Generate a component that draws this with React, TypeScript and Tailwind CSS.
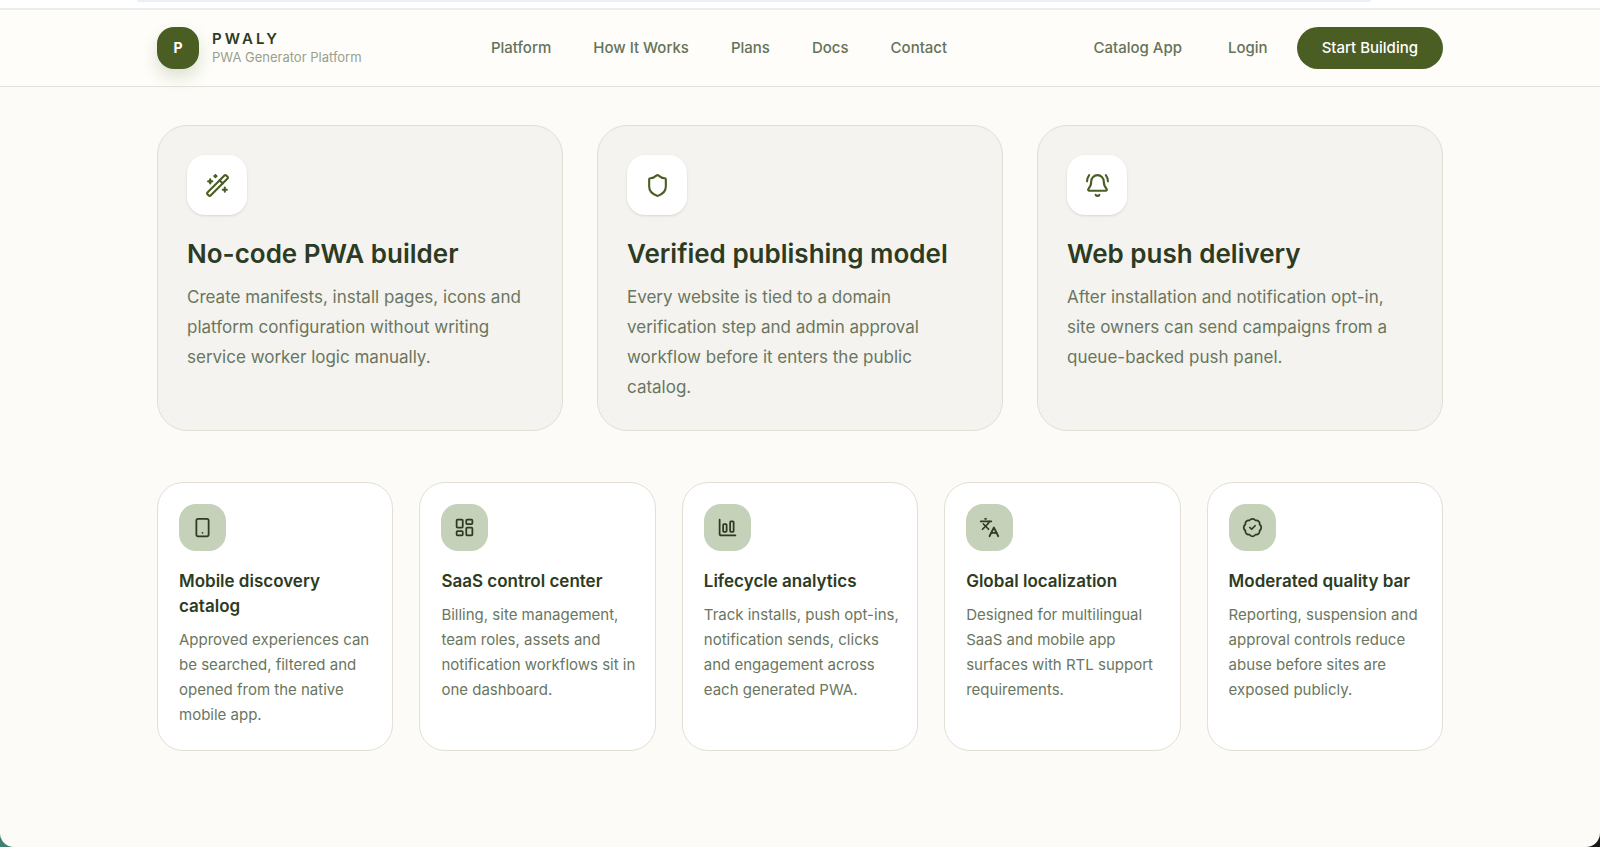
import {
  BadgeCheck,
  BellRing,
  ChartColumnBig,
  Languages,
  LayoutDashboard,
  Shield,
  Smartphone,
  WandSparkles,
  type LucideIcon,
} from "lucide-react";

type Feature = {
  icon: LucideIcon;
  title: string;
  description: string;
};

const navLinks = ["Platform", "How It Works", "Plans", "Docs", "Contact"];

const pillars: Feature[] = [
  {
    icon: WandSparkles,
    title: "No-code PWA builder",
    description:
      "Create manifests, install pages, icons and platform configuration without writing service worker logic manually.",
  },
  {
    icon: Shield,
    title: "Verified publishing model",
    description:
      "Every website is tied to a domain verification step and admin approval workflow before it enters the public catalog.",
  },
  {
    icon: BellRing,
    title: "Web push delivery",
    description:
      "After installation and notification opt-in, site owners can send campaigns from a queue-backed push panel.",
  },
];

const capabilities: Feature[] = [
  {
    icon: Smartphone,
    title: "Mobile discovery catalog",
    description:
      "Approved experiences can be searched, filtered and opened from the native mobile app.",
  },
  {
    icon: LayoutDashboard,
    title: "SaaS control center",
    description:
      "Billing, site management, team roles, assets and notification workflows sit in one dashboard.",
  },
  {
    icon: ChartColumnBig,
    title: "Lifecycle analytics",
    description:
      "Track installs, push opt-ins, notification sends, clicks and engagement across each generated PWA.",
  },
  {
    icon: Languages,
    title: "Global localization",
    description:
      "Designed for multilingual SaaS and mobile app surfaces with RTL support requirements.",
  },
  {
    icon: BadgeCheck,
    title: "Moderated quality bar",
    description:
      "Reporting, suspension and approval controls reduce abuse before sites are exposed publicly.",
  },
];

const Header = () => {
  return (
    <header className="border-b border-[#e6e1d8] bg-[#fefdf9]">
      <div className="mx-auto flex h-[76px] max-w-[1286px] items-center justify-between text-[15px] font-medium text-[#65735a]">
        <a href="#" className="flex items-center gap-[13px]">
          <span className="flex size-[42px] items-center justify-center rounded-[17px] bg-[#4a5d23] text-sm font-bold text-white shadow-[0_8px_16px_rgba(74,93,35,0.18)]">
            P
          </span>
          <span className="flex flex-col">
            <span className="text-[15px] leading-[18px] font-semibold tracking-[0.2em] text-[#2d3b22]">
              PWALY
            </span>
            <span className="text-[13px] leading-[19px] font-normal text-[#98a18e]">
              PWA Generator Platform
            </span>
          </span>
        </a>
        <nav className="flex items-center gap-[42px]">
          {navLinks.map((label) => (
            <a key={label} href="#">
              {label}
            </a>
          ))}
        </nav>
        <div className="flex items-center gap-3">
          <a href="#" className="px-[17px]">
            Catalog App
          </a>
          <a href="#" className="px-[17px]">
            Login
          </a>
          <button
            type="button"
            className="h-[42px] rounded-full bg-[#4a5d23] px-[25px] text-white"
          >
            Start Building
          </button>
        </div>
      </div>
    </header>
  );
};

const PillarCard = ({ icon: Icon, title, description }: Feature) => {
  return (
    <article className="rounded-[30px] border border-[#e1dfd3] bg-[#f4f3ef] px-[29px] pt-[29px] pb-7">
      <div className="flex size-[60px] items-center justify-center rounded-[18px] bg-white text-[#4a5d23] shadow-sm">
        <Icon size={25} />
      </div>
      <h3 className="mt-[22px] text-[26px] leading-[34px] font-semibold text-[#2d3b22]">
        {title}
      </h3>
      <p className="mt-[11px] text-[17px] leading-[30px] text-[#6a7660]">
        {description}
      </p>
    </article>
  );
};

const CapabilityCard = ({ icon: Icon, title, description }: Feature) => {
  return (
    <article className="rounded-[26px] border border-[#e3dfd4] bg-white pt-[21px] pr-[17px] pb-[23px] pl-[21px]">
      <div className="flex size-[47px] items-center justify-center rounded-[17px] bg-[#c5d1b9] text-[#2d3b22]">
        <Icon size={21} />
      </div>
      <h4 className="mt-[18px] text-[17px] leading-[25px] font-semibold text-[#2d3b22]">
        {title}
      </h4>
      <p className="mt-2 text-[15px] leading-[25px] text-[#6a7660]">
        {description}
      </p>
    </article>
  );
};

export default function App() {
  return (
    <div className="flex min-h-screen bg-linear-to-r from-[#3f7f74] to-[#16181a] font-['Inter',sans-serif]">
      <div className="flex-1 overflow-hidden rounded-b-[14px] bg-[#fcfbf7]">
        <div className="border-b-2 border-[#ececec] bg-white pr-[229px] pb-[6px] pl-[137px]">
          <div className="h-[2px] rounded-b-full bg-[#e9f0fa]" />
        </div>
        <Header />
        <main className="mx-auto max-w-[1286px] pt-[38px] pb-24">
          <section className="grid grid-cols-3 gap-[34px]">
            {pillars.map((item) => (
              <PillarCard key={item.title} {...item} />
            ))}
          </section>
          <section className="mt-[51px] grid grid-cols-5 gap-[26px]">
            {capabilities.map((item) => (
              <CapabilityCard key={item.title} {...item} />
            ))}
          </section>
        </main>
      </div>
    </div>
  );
}
